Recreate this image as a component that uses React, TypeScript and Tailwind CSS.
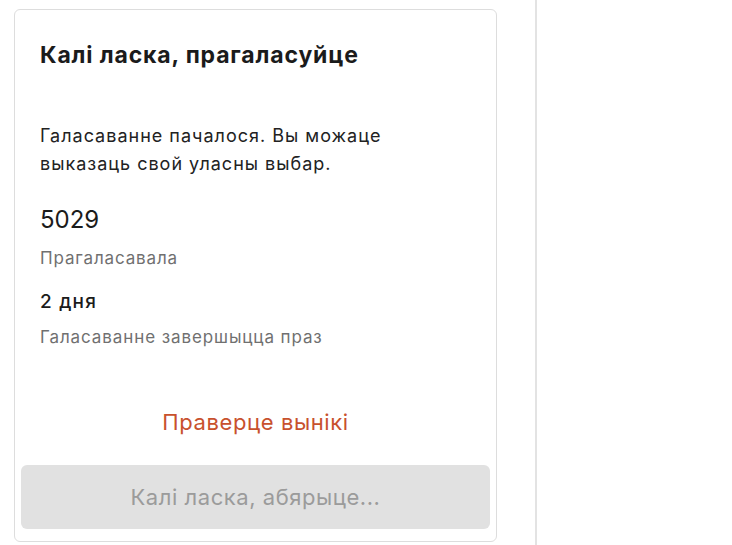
import React from 'react';

const font = { fontFamily: 'Inter, "Noto Sans", sans-serif' };

export default function App() {
  return (
    <div className="flex h-[545px] w-full overflow-hidden bg-white" style={font}>
      <div className="w-[537px] shrink-0 border-r-2 border-[#e3e3e3] pl-[14px] pt-[9px]">
        <div className="flex h-[533px] w-[483px] flex-col rounded-md border border-[#dddddd] bg-white">
          <div className="px-[25px]">
            <h1 className="mt-[31px] text-[23px] font-bold leading-[28px] tracking-[0.85px] text-[#1b1b1b]">
              Калі ласка, прагаласуйце
            </h1>
            <p className="mt-[53px] text-[18px] leading-[28px] tracking-[1px] text-[#222222]">
              Галасаванне пачалося. Вы можаце
              <br />
              выказаць свой уласны выбар.
            </p>
            <div className="mt-[26px] text-[24px] leading-[32px] text-[#1b1b1b]">5029</div>
            <div className="mt-[10px] text-[17px] leading-[24px] tracking-[0.85px] text-[#707070]">
              Прагаласавала
            </div>
            <div className="mt-[20px] text-[19px] font-medium leading-[24px] tracking-[1.2px] text-[#1b1b1b]">
              2 дня
            </div>
            <div className="mt-[11px] text-[17px] leading-[24px] tracking-[0.9px] text-[#707070]">
              Галасаванне завершыцца праз
            </div>
          </div>
          <button className="mt-[59px] self-center text-[22px] leading-[28px] tracking-[0.6px] text-[#c8512d]">
            Праверце вынікі
          </button>
          <div className="mx-[6px] mt-auto mb-[12px] flex h-[64px] items-center justify-center rounded-md bg-[#e1e1e1] text-[22px] leading-[28px] tracking-[0.55px] text-[#9b9b9b]">
            Калі ласка, абярыце...
          </div>
        </div>
      </div>
      <div className="flex-1" />
    </div>
  );
}
